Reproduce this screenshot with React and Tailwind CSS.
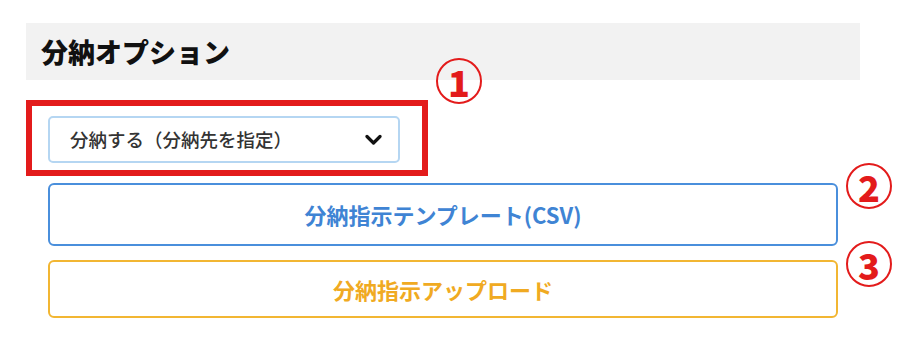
export default function App() {
  const jp = { fontFamily: '"Noto Sans CJK JP", "Noto Sans", sans-serif' };
  const num = "absolute flex h-[46px] w-[46px] items-center justify-center rounded-full border-2 border-[#e31b1b] text-[36px] font-black leading-none text-[#e31b1b]";
  return (
    <div className="relative h-[350px] w-[900px] bg-white pl-[26px] pt-[23px]" style={jp}>
      <div className="flex h-[57px] w-[834px] items-center bg-[#f2f2f2] pl-[15px]">
        <h2 className="text-[27px] font-black leading-none text-[#111]">分納オプション</h2>
      </div>

      <div className="mt-[20px] h-[76px] w-[402px] border-[6px] border-[#e31b1b] pl-[16px] pt-[10px]">
        <div className="flex h-[47px] w-[352px] items-center justify-between rounded-[5px] border-2 border-[#b5d6f2] pl-[20px] pr-[16px]">
          <span className="text-[18.5px] font-medium text-[#333]">分納する（分納先を指定）</span>
          <svg width="17" height="12" viewBox="0 0 17 12" fill="none">
            <path d="M2 2.5 L8.5 9 L15 2.5" stroke="#111" strokeWidth="3.2" strokeLinecap="round" strokeLinejoin="round" />
          </svg>
        </div>
      </div>

      <div className="ml-[22px] mt-[7px] flex w-[790px] flex-col gap-[14px]">
        <button className="flex h-[63px] items-center justify-center rounded-[6px] border-2 border-[#4a8fdc] bg-white text-[22px] font-bold text-[#3f84d4]">
          分納指示テンプレート(CSV)
        </button>
        <button className="flex h-[58px] items-center justify-center rounded-[6px] border-2 border-[#f2b632] bg-white text-[22px] font-bold text-[#f0aa22]">
          分納指示アップロード
        </button>
      </div>

      <div className={`${num} left-[436px] top-[58px]`}>1</div>
      <div className={`${num} left-[846px] top-[163px]`}>2</div>
      <div className={`${num} left-[846px] top-[241px]`}>3</div>
    </div>
  );
}
